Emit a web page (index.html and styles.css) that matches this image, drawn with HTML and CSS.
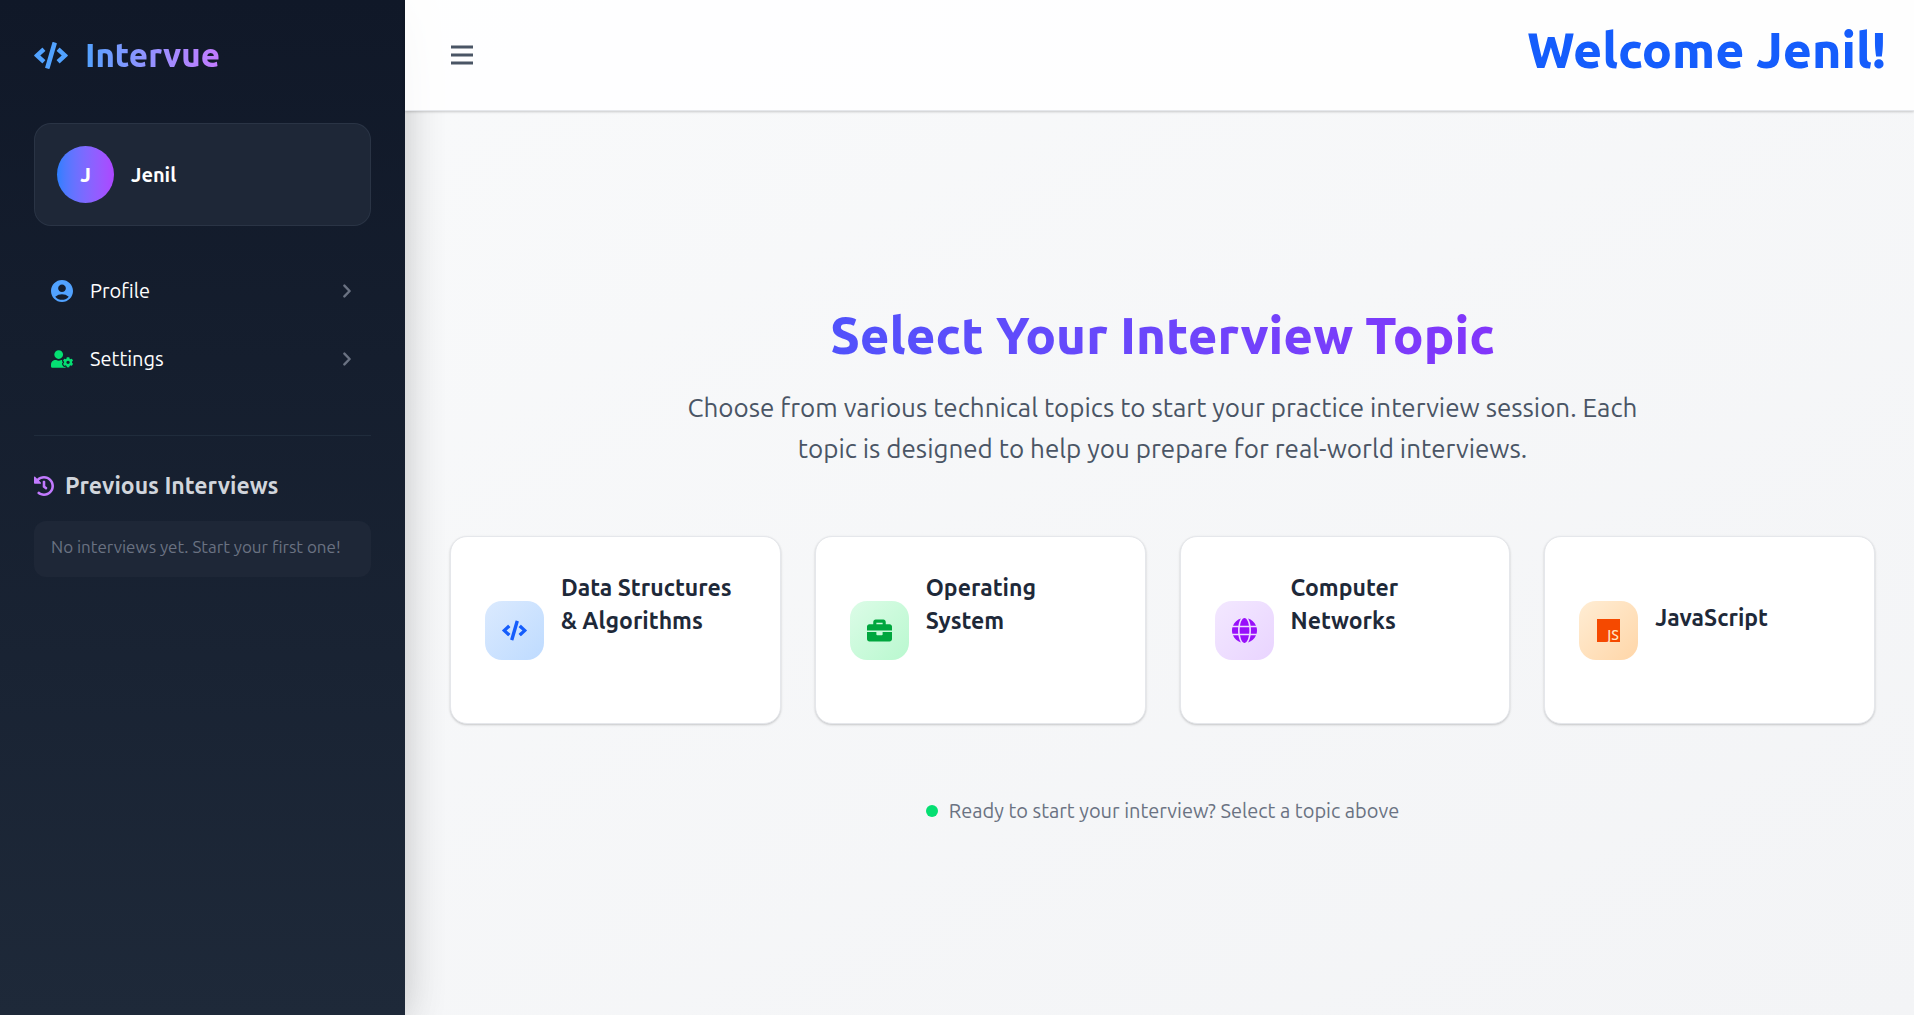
FILE: index.html
```html
<!DOCTYPE html>
<html lang="en">
<head>
<meta charset="utf-8">
<meta name="viewport" content="width=device-width, initial-scale=1">
<title>Intervue</title>
<link rel="stylesheet" href="styles.css">
</head>
<body>
<svg class="sprite" aria-hidden="true">
  <symbol id="code" viewBox="0 0 640 512"><path d="M278.9 511.5l-61-17.7c-6.4-1.8-10-8.5-8.2-14.9L346.2 8.7c1.8-6.4 8.5-10 14.9-8.2l61 17.7c6.4 1.8 10 8.5 8.2 14.9L293.8 503.3c-1.9 6.4-8.5 10.1-14.9 8.2zm-114-112.2l43.5-46.4c4.6-4.9 4.3-12.7-.8-17.2L117 256l90.6-79.7c5.1-4.5 5.5-12.3.8-17.2l-43.5-46.4c-4.5-4.8-12.1-5.1-17-.5L3.8 247.2c-5.1 4.7-5.1 12.8 0 17.5l144.1 135.1c4.9 4.6 12.5 4.4 17-.5zm327.2.6l144.1-135.1c5.1-4.7 5.1-12.8 0-17.5L492.1 112.1c-4.8-4.5-12.4-4.3-17 .5L431.6 159c-4.6 4.9-4.3 12.7.8 17.2L523 256l-90.6 79.7c-5.1 4.5-5.5 12.3-.8 17.2l43.5 46.4c4.5 4.9 12.1 5.1 17 .6z"/></symbol>
  <symbol id="chevron" viewBox="0 0 8 14"><path d="M1.4 1.6 6.6 7 1.4 12.4" fill="none" stroke="currentColor" stroke-width="2.4" stroke-linecap="round" stroke-linejoin="round"/></symbol>
</svg>
<div class="app">
  <aside class="sidebar">
    <div class="brand">
      <svg class="brand__icon" aria-hidden="true"><use href="#code"/></svg>
      <span class="brand__name">Intervue</span>
    </div>
    <div class="user">
      <div class="user__avatar">J</div>
      <div class="user__name">Jenil</div>
    </div>
    <nav class="nav">
      <a class="nav__link" href="#profile">
        <svg class="nav__icon nav__icon--blue" viewBox="2 2 20 20" aria-hidden="true"><path d="M12 2C6.48 2 2 6.48 2 12s4.48 10 10 10 10-4.48 10-10S17.52 2 12 2zm0 4c1.93 0 3.5 1.57 3.5 3.5S13.93 13 12 13s-3.5-1.57-3.5-3.5S10.07 6 12 6zm0 14c-2.03 0-4.43-.82-6.14-2.88a9.947 9.947 0 0 1 12.28 0C16.43 19.18 14.03 20 12 20z"/></svg>
        <span class="nav__label">Profile</span>
        <svg class="nav__chevron" aria-hidden="true"><use href="#chevron"/></svg>
      </a>
      <a class="nav__link" href="#settings">
        <svg class="nav__icon nav__icon--green" viewBox="0 0 640 512" aria-hidden="true"><path d="M610.5 373.3c2.6-14.1 2.6-28.5 0-42.6l25.8-14.9c3-1.7 4.3-5.2 3.3-8.5-6.7-21.6-18.2-41.2-33.2-57.4-2.3-2.5-6-3.1-9-1.4l-25.8 14.9c-10.9-9.3-23.4-16.5-36.9-21.3v-29.8c0-3.4-2.4-6.4-5.7-7.1-22.3-5-45-4.8-66.2 0-3.3.7-5.7 3.7-5.7 7.1v29.8c-13.5 4.8-26 12-36.9 21.3l-25.8-14.9c-2.9-1.7-6.7-1.1-9 1.4-15 16.2-26.5 35.8-33.2 57.4-1 3.3.4 6.8 3.3 8.5l25.8 14.9c-2.6 14.1-2.6 28.5 0 42.6l-25.8 14.9c-3 1.7-4.3 5.2-3.3 8.5 6.7 21.6 18.2 41.1 33.2 57.4 2.3 2.5 6 3.1 9 1.4l25.8-14.9c10.9 9.3 23.4 16.5 36.9 21.3v29.8c0 3.4 2.4 6.4 5.7 7.1 22.3 5 45 4.8 66.2 0 3.3-.7 5.7-3.7 5.7-7.1v-29.8c13.5-4.8 26-12 36.9-21.3l25.8 14.9c2.9 1.7 6.7 1.1 9-1.4 15-16.2 26.5-35.8 33.2-57.4 1-3.3-.4-6.8-3.3-8.5l-25.8-14.9zM496 400.5c-26.8 0-48.5-21.8-48.5-48.5s21.8-48.5 48.5-48.5 48.5 21.8 48.5 48.5-21.7 48.5-48.5 48.5zM224 256c70.7 0 128-57.3 128-128S294.7 0 224 0 96 57.3 96 128s57.3 128 128 128zm201.2 226.5c-2.3-1.2-4.6-2.6-6.8-3.9l-7.9 4.6c-6 3.4-12.8 5.3-19.6 5.3-10.9 0-21.4-4.6-28.9-12.6-18.3-19.8-32.3-43.9-40.2-69.6-5.5-17.7 1.9-36.4 17.9-45.7l7.9-4.6c-.1-2.6-.1-5.2 0-7.8l-7.9-4.6c-16-9.2-23.4-28-17.9-45.7.9-2.9 2.2-5.8 3.2-8.7-3.8-.3-7.5-1.2-11.4-1.2h-16.7c-22.2 10.2-46.9 16-72.9 16s-50.6-5.8-72.9-16h-16.7C60.2 288 0 348.2 0 422.4V464c0 26.5 21.5 48 48 48h352c10.1 0 19.5-3.2 27.2-8.5-1.2-3.8-2-7.7-2-11.8v-9.2z"/></svg>
        <span class="nav__label">Settings</span>
        <svg class="nav__chevron" aria-hidden="true"><use href="#chevron"/></svg>
      </a>
    </nav>
    <section class="history">
      <h2 class="history__title">
        <svg class="history__icon" viewBox="8 8 496 496" aria-hidden="true"><path d="M504 255.531c.253 136.64-111.18 248.372-247.82 248.468-59.015.042-113.223-20.53-155.822-54.911-11.077-8.94-11.905-25.541-1.839-35.607l11.267-11.267c8.609-8.609 22.353-9.551 31.891-1.984C173.062 425.135 212.781 440 256 440c101.705 0 184-82.311 184-184 0-101.705-82.311-184-184-184-48.814 0-93.149 18.969-126.068 49.932l50.754 50.754c10.08 10.08 2.941 27.314-11.313 27.314H24c-8.837 0-16-7.163-16-16V38.627c0-14.254 17.234-21.393 27.314-11.314l49.372 49.372C129.209 34.136 189.552 8 256 8c136.81 0 247.747 110.78 248 247.531zm-180.912 78.784l9.823-12.63c8.138-10.463 6.253-25.542-4.21-33.679L288 256.349V152c0-13.255-10.745-24-24-24h-16c-13.255 0-24 10.745-24 24v135.651l65.409 50.874c10.463 8.137 25.541 6.253 33.679-4.21z"/></svg>
        <span>Previous Interviews</span>
      </h2>
      <p class="history__empty">No interviews yet. Start your first one!</p>
    </section>
  </aside>

  <div class="page">
    <header class="topbar">
      <button class="topbar__menu" type="button" aria-label="Toggle sidebar">
        <svg class="topbar__bars" viewBox="0 0 22 20" aria-hidden="true"><path d="M0 0.5h22v3H0zM0 8.5h22v3H0zM0 16.5h22v3H0z"/></svg>
      </button>
      <h1 class="topbar__welcome">Welcome Jenil!</h1>
    </header>
    <main class="main">
      <h2 class="main__title">Select Your Interview Topic</h2>
      <p class="main__lead">Choose from various technical topics to start your practice interview session. Each topic is designed to help you prepare for real-world interviews.</p>
      <div class="topics">
        <button class="topic" type="button">
          <span class="topic__tile topic__tile--blue"><svg class="topic__icon" aria-hidden="true"><use href="#code"/></svg></span>
          <span class="topic__title">Data Structures &amp; Algorithms</span>
        </button>
        <button class="topic" type="button">
          <span class="topic__tile topic__tile--green"><svg class="topic__icon" viewBox="0 0 512 512" aria-hidden="true"><path d="M320 336c0 8.84-7.16 16-16 16h-96c-8.84 0-16-7.16-16-16v-48H0v144c0 25.6 22.4 48 48 48h416c25.6 0 48-22.4 48-48V288H320v48zm144-208h-80V80c0-25.6-22.4-48-48-48H176c-25.6 0-48 22.4-48 48v48H48c-25.6 0-48 22.4-48 48v80h512v-80c0-25.6-22.4-48-48-48zm-144 0H192V96h128v32z"/></svg></span>
          <span class="topic__title">Operating System</span>
        </button>
        <button class="topic" type="button">
          <span class="topic__tile topic__tile--purple"><svg class="topic__icon" viewBox="0 8 496 496" aria-hidden="true"><path d="M336.5 160C322 70.7 287.8 8 248 8s-74 62.7-88.5 152h177zM152 256c0 22.2 1.2 43.5 3.3 64h185.3c2.1-20.5 3.3-41.8 3.3-64s-1.2-43.5-3.3-64H155.3c-2.1 20.5-3.3 41.8-3.3 64zm324.7-96c-28.6-67.9-86.5-120.4-158-141.6 24.4 33.8 41.2 84.7 50 141.6h108zM177.2 18.4C105.8 39.6 47.8 92.1 19.3 160h108c8.7-56.9 25.5-107.8 49.9-141.6zM487.4 192H372.7c2.1 21 3.3 42.5 3.3 64s-1.2 43-3.3 64h114.6c5.5-20.5 8.6-41.8 8.6-64s-3.1-43.5-8.5-64zM120 256c0-21.5 1.2-43 3.3-64H8.6C3.2 212.5 0 233.8 0 256s3.2 43.5 8.6 64h114.6c-2-21-3.2-42.5-3.2-64zm39.5 96c14.5 89.3 48.7 152 88.5 152s74-62.7 88.5-152h-177zm159.3 141.6c71.4-21.2 129.4-73.7 158-141.6h-108c-8.8 56.9-25.6 107.8-50 141.6zM19.3 352c28.6 67.9 86.5 120.4 158 141.6-24.4-33.8-41.2-84.7-50-141.6h-108z"/></svg></span>
          <span class="topic__title">Computer Networks</span>
        </button>
        <button class="topic" type="button">
          <span class="topic__tile topic__tile--orange"><svg class="topic__icon" viewBox="0 0 25 25" aria-hidden="true"><path d="M1 1h23v23H1z"/><text class="topic__js" x="23" y="22" text-anchor="end">JS</text></svg></span>
          <span class="topic__title topic__title--single">JavaScript</span>
        </button>
      </div>
      <p class="ready"><span class="ready__dot"></span>Ready to start your interview? Select a topic above</p>
    </main>
  </div>
</div>
</body>
</html>
```
FILE: styles.css
```css
*, *::before, *::after { box-sizing: border-box; }

body {
  margin: 0;
  font-family: Ubuntu, "Noto Sans", sans-serif;
  font-size: 20px;
  line-height: 28px;
  color: #1e2939;
}

h1, h2, p { margin: 0; }
svg { display: block; flex: none; fill: currentColor; }
button { font: inherit; color: inherit; cursor: pointer; }
.sprite { position: absolute; width: 0; height: 0; }

.app {
  display: flex;
  min-height: 100vh;
  background: linear-gradient(to bottom right, #f9fafb, #f3f4f6);
}

/* Sidebar */
.sidebar {
  flex: none;
  width: 405px;
  padding: 34px;
  color: #fff;
  background: linear-gradient(to bottom, #101828, #1e2939);
  box-shadow: 0 25px 50px -12px rgba(0, 0, 0, 0.2), 0 0 40px rgba(0, 0, 0, 0.1);
}

.brand { display: flex; align-items: center; gap: 17px; height: 42px; }
.brand__icon { width: 34px; height: 27px; color: #51a2ff; }
.brand__name {
  font-size: 33px;
  font-weight: 800;
  line-height: 42px;
  color: transparent;
  background: linear-gradient(to right in oklab, #51a2ff, #c27aff);
  background-clip: text;
}

.user {
  display: flex;
  align-items: center;
  gap: 17px;
  margin-top: 47px;
  padding: 22px;
  border: 1px solid rgba(54, 65, 83, 0.5);
  border-radius: 17px;
  font-size: 20px;
  font-weight: 600;
  background: #1e2737;
}
.user__avatar {
  display: grid;
  place-items: center;
  width: 57px;
  height: 57px;
  border-radius: 50%;
  font-weight: 800;
  background: linear-gradient(to right in oklab, #2b7fff, #ad46ff);
}

.nav { display: grid; gap: 8px; margin-top: 35px; }
.nav__link {
  display: flex;
  align-items: center;
  gap: 17px;
  height: 60px;
  padding: 0 20px 0 17px;
  color: #fff;
  text-decoration: none;
}
.nav__icon { width: 22px; height: 22px; }
.nav__icon--blue { color: #51a2ff; }
.nav__icon--green { color: #05df72; }
.nav__label { flex: 1; }
.nav__chevron { width: 8px; height: 14px; color: #6a7282; }

.history {
  margin-top: 46px;
  padding-top: 35px;
  border-top: 1px solid #202c3c;
}
.history__title {
  display: flex;
  align-items: center;
  gap: 11px;
  font-size: 23px;
  font-weight: 700;
  line-height: 30px;
  color: #d1d5dc;
}
.history__icon { width: 20px; height: 20px; color: #c27aff; }
.history__empty {
  margin-top: 20px;
  padding: 14px 17px 18px;
  border-radius: 12px;
  font-size: 17px;
  line-height: 24px;
  color: #6a7282;
  background: #1e2737;
}

/* Page */
.page { display: flex; flex: 1; flex-direction: column; min-width: 0; }

.topbar {
  display: flex;
  align-items: center;
  justify-content: space-between;
  height: 111px;
  padding: 0 28px 0 46px;
  border-bottom: 1px solid #e5e7eb;
  background: rgba(255, 255, 255, 0.85);
  box-shadow: 0 1px 3px rgba(0, 0, 0, 0.1), 0 1px 2px rgba(0, 0, 0, 0.1);
}
.topbar__menu { padding: 0; border: 0; background: none; color: #4a5565; }
.topbar__bars { width: 22px; height: 20px; }
.topbar__welcome {
  padding-bottom: 12px;
  font-size: 50px;
  font-weight: 800;
  line-height: 60px;
  color: #155dfc;
}

.main {
  display: flex;
  flex: 1;
  flex-direction: column;
  justify-content: center;
  padding: 34px 39px 30px 45px;
  text-align: center;
}
.main__title {
  font-size: 51px;
  font-weight: 800;
  line-height: 60px;
  color: transparent;
  background: linear-gradient(to right in oklab, #155dfc, #9810fa);
  background-clip: text;
}
.main__lead {
  align-self: center;
  max-width: 968px;
  margin-top: 22px;
  font-size: 26px;
  line-height: 41px;
  color: #4a5565;
}

.topics {
  display: grid;
  grid-template-columns: repeat(4, 1fr);
  gap: 34px;
  margin-top: 67px;
}
.topic {
  display: flex;
  align-items: center;
  gap: 17px;
  min-width: 0;
  padding: 34px;
  border: 1px solid #e5e7eb;
  border-radius: 17px;
  text-align: left;
  background: #fff;
  box-shadow: 0 1px 3px rgba(0, 0, 0, 0.1), 0 1px 2px rgba(0, 0, 0, 0.1);
}
.topic__tile {
  display: grid;
  flex: none;
  place-items: center;
  width: 59px;
  height: 59px;
  border-radius: 17px;
}
.topic__tile--blue { color: #155dfc; background: linear-gradient(to bottom right, #dbeafe, #bedbff); }
.topic__tile--green { color: #00a63e; background: linear-gradient(to bottom right, #dcfce7, #b9f8cf); }
.topic__tile--purple { color: #9810fa; background: linear-gradient(to bottom right, #f3e8ff, #e9d4ff); }
.topic__tile--orange { color: #f54900; background: linear-gradient(to bottom right, #ffedd4, #ffd6a8); }
.topic__icon { width: 25px; height: 25px; }
.topic__js { font: 500 14px "Noto Sans", sans-serif; fill: #ffe3c0; }
.topic__title {
  padding-bottom: 52px;
  font-size: 23px;
  font-weight: 600;
  line-height: 33px;
}
.topic__title--single { padding-bottom: 26px; }

.ready {
  display: flex;
  align-items: center;
  justify-content: center;
  gap: 11px;
  margin-top: 73px;
  color: #6a7282;
}
.ready__dot { width: 12px; height: 12px; border-radius: 50%; background: #05df72; }
```
